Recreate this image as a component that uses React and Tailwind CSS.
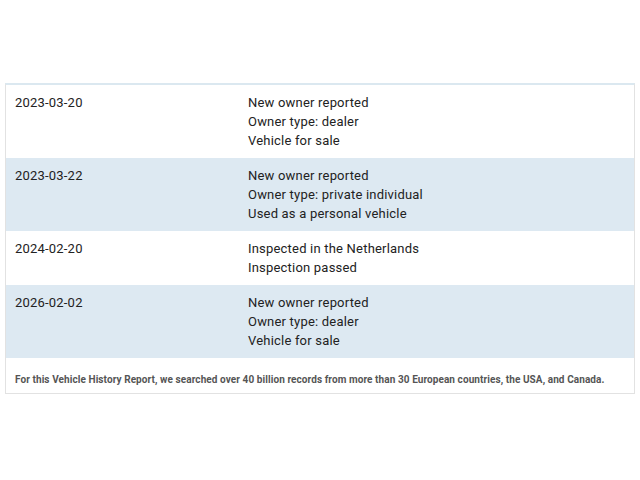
const events = [
  { date: "2023-03-20", lines: ["New owner reported", "Owner type: dealer", "Vehicle for sale"] },
  { date: "2023-03-22", lines: ["New owner reported", "Owner type: private individual", "Used as a personal vehicle"] },
  { date: "2024-02-20", lines: ["Inspected in the Netherlands", "Inspection passed"] },
  { date: "2026-02-02", lines: ["New owner reported", "Owner type: dealer", "Vehicle for sale"] },
];

const App = () => {
  return (
    <div className="w-[640px] h-[480px] bg-white pt-[83px] px-[5px]" style={{ fontFamily: "Roboto, 'Liberation Sans', sans-serif" }}>
      <div className="border border-[#e2e2e2] border-t-2 border-t-[#dbe8f0]">
        {events.map((ev, i) => (
          <div
            key={ev.date + i}
            className={`flex py-2 text-[13px] leading-[19px] text-[#222] tracking-[0.2px] ${i % 2 === 1 ? "bg-[#dde9f2]" : "bg-white"}`}
          >
            <div className="w-[242px] pl-[9px]">{ev.date}</div>
            <div>
              {ev.lines.map((l) => (
                <div key={l}>{l}</div>
              ))}
            </div>
          </div>
        ))}
        <div className="pl-[9px] pt-[16px] pb-[7px] text-[10px] leading-[12px] font-bold text-[#555] tracking-[0.08px]">
          For this Vehicle History Report, we searched over 40 billion records from more than 30 European countries, the USA, and Canada.
        </div>
      </div>
    </div>
  );
};

export default App;
